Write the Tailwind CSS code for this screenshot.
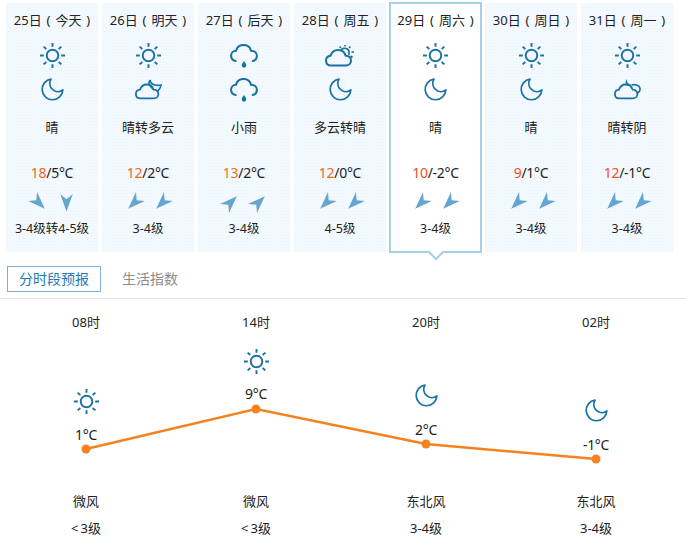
<!DOCTYPE html>
<html lang="zh">
<head>
  <meta charset="UTF-8" />
  <title>天气预报</title>
  <script src="https://cdn.jsdelivr.net/npm/@tailwindcss/browser@4"></script>
</head>
<body class="bg-white w-[686px] h-[552px] overflow-hidden text-[13px] text-[#222] font-['Noto_Sans','Noto_Sans_CJK_SC',sans-serif]">
  <svg class="hidden">
    <symbol id="sun" viewBox="0 0 28 28">
      <g fill="none" stroke="currentColor" stroke-width="2">
        <circle cx="14" cy="14" r="6" />
        <path d="M14 1v4M14 23v4M1 14h4M23 14h4M4.800 4.800l2.800 2.400M20.400 20.800l2.800 2.400M23.200 4.800l-2.800 2.400M7.600 20.800l-2.800 2.400" />
      </g>
    </symbol>
    <symbol id="moon" viewBox="0 0 24 24">
      <path d="M10.500 1.200A10.800 10.800 0 1 0 22.800 12.500A8.500 8.500 0 0 1 10.500 1.200Z" fill="none" stroke="currentColor" stroke-width="1.800" stroke-linejoin="round" />
    </symbol>
    <symbol id="rain" viewBox="0 0 30 26">
      <path d="M6 18.500C2.800 17.800 1 15.500 1 12.700 1 9.600 3.400 7.300 6.400 7.200 7.400 3.500 10.500 1 14.500 1 18.500 1 21.700 3.700 22.600 7.200 26 7.100 29 9.500 29 12.800 29 15.500 27.200 17.700 24.500 18.500" fill="none" stroke="currentColor" stroke-width="2.200" stroke-linecap="round" />
      <path d="M15 18.500c1.700 2.400 2.500 3.400 2.500 4.600a2.500 2.500 0 0 1-5 0c0-1.200.8-2.200 2.500-4.600Z" fill="currentColor" />
    </symbol>
    <symbol id="cloudmoon" viewBox="0 0 30 24">
      <path d="M6 22.500C2.500 22.500 1 20 1 17.500 1 15 3 13 5.600 12.700 6.800 9 9.800 7 13 7 16.800 7 19.700 9.500 20.600 12.700 23.800 12.500 26 14.800 26 17.600 26 20.500 23.800 22.500 21 22.500Z" fill="none" stroke="currentColor" stroke-width="2" stroke-linejoin="round" />
      <path d="M16.500 2C15 5 15.500 7.500 17.500 9.500 19 11 19.500 11.500 20.500 12.500M16.500 2C17.500 6 21 9 29 7.500 28.500 10.500 27 13 25 14.500" fill="none" stroke="currentColor" stroke-width="1.800" />
    </symbol>
    <symbol id="cloudsun" viewBox="0 0 30 22">
      <path d="M6 20.500C2.500 20.500 1 18 1 15.500 1 13 3 11 5.600 10.700 6.800 7 9.800 5 13 5 16.800 5 19.700 7.500 20.600 10.700 23.800 10.500 26 12.800 26 15.600 26 18.500 23.800 20.500 21 20.500Z" fill="none" stroke="currentColor" stroke-width="2" stroke-linejoin="round" />
      <path d="M15.800 5.500A4.500 4.500 0 1 1 23.600 10M20 0v1.500M14.500 1.500l1.500 1.500M25.500 1.500l-1.500 1.500M29 7h-2.500M27.500 12.500l-2-1.500" fill="none" stroke="currentColor" stroke-width="1.700" />
    </symbol>
    <symbol id="cloudnight" viewBox="0 0 30 24">
      <path d="M6 22.500C2.500 22.500 1 20 1 17.500 1 15 3 13 5.600 12.700 6.800 9 9.800 7 13 7 16.800 7 19.700 9.500 20.600 12.700 23.800 12.500 26 14.800 26 17.600 26 20.500 23.800 22.500 21 22.500Z" fill="none" stroke="currentColor" stroke-width="2" stroke-linejoin="round" />
      <path d="M14.500 1C13.600 4.500 16 7 20 7.500 18 9 15.200 8.500 13.500 7 12.300 5.300 13 2.500 14.500 1Z" fill="currentColor" />
      <path d="M19.500 7.500C24 6.500 28.500 8 29 11.500 29.300 13.800 27.800 15.500 26 16.500" fill="none" stroke="currentColor" stroke-width="1.800" />
    </symbol>
    <symbol id="wind" viewBox="0 0 20 20">
      <path d="M10 1.500 16 18 10 13 4 18Z" fill="#67a5d1" />
    </symbol>
  </svg>

  <div class="flex gap-1 pl-[6px] pt-[3px] text-center">
    <div class="flex flex-col items-center w-[92px] h-[249px] pt-[8px] bg-[#f1fbff] bg-[radial-gradient(#fce9f9_0.8px,transparent_0.9px)] bg-[length:3px_3px]">
      <div class="h-[18px] leading-[18px] whitespace-nowrap [word-spacing:1.5px]">25日 ( 今天 )</div>
      <svg class="mt-[13px] w-[27px] h-[27px] text-[#1a72a3]"><use href="#sun" /></svg>
      <svg class="mt-[9px] w-[23px] h-[23px] text-[#1a72a3]"><use href="#moon" /></svg>
      <div class="mt-[17px] h-[18px] leading-[18px]">晴</div>
      <div class="mt-[28px] h-[18px] leading-[18px] text-[14px] tracking-[-0.3px]"><span class="text-[#f0641e]">18</span>/5°C</div>
      <div class="mt-[10px] flex gap-[7px]">
        <svg class="w-[21px] h-[21px] rotate-[135deg]"><use href="#wind" /></svg>
        <svg class="w-[21px] h-[21px] rotate-180"><use href="#wind" /></svg>
      </div>
      <div class="mt-[7px] h-[18px] leading-[18px] text-[12.5px] whitespace-nowrap">3-4级转4-5级</div>
    </div>

    <div class="flex flex-col items-center w-[92px] h-[249px] pt-[8px] bg-[#f1fbff] bg-[radial-gradient(#fce9f9_0.8px,transparent_0.9px)] bg-[length:3px_3px]">
      <div class="h-[18px] leading-[18px] whitespace-nowrap [word-spacing:1.5px]">26日 ( 明天 )</div>
      <svg class="mt-[13px] w-[27px] h-[27px] text-[#1a72a3]"><use href="#sun" /></svg>
      <svg class="mt-[9px] w-[27px] h-[22px] text-[#1a72a3]"><use href="#cloudmoon" /></svg>
      <div class="mt-[18px] h-[18px] leading-[18px]">晴转多云</div>
      <div class="mt-[28px] h-[18px] leading-[18px] text-[14px] tracking-[-0.3px]"><span class="text-[#f0641e]">12</span>/2°C</div>
      <div class="mt-[10px] flex gap-[7px]">
        <svg class="w-[21px] h-[21px] rotate-[225deg]"><use href="#wind" /></svg>
        <svg class="w-[21px] h-[21px] rotate-[225deg]"><use href="#wind" /></svg>
      </div>
      <div class="mt-[7px] h-[18px] leading-[18px] text-[12.5px]">3-4级</div>
    </div>

    <div class="flex flex-col items-center w-[92px] h-[249px] pt-[8px] bg-[#f1fbff] bg-[radial-gradient(#fce9f9_0.8px,transparent_0.9px)] bg-[length:3px_3px]">
      <div class="h-[18px] leading-[18px] whitespace-nowrap [word-spacing:1.5px]">27日 ( 后天 )</div>
      <svg class="mt-[15px] w-[28px] h-[24px] text-[#1a72a3]"><use href="#rain" /></svg>
      <svg class="mt-[10px] w-[28px] h-[24px] text-[#1a72a3]"><use href="#rain" /></svg>
      <div class="mt-[16px] h-[18px] leading-[18px]">小雨</div>
      <div class="mt-[28px] h-[18px] leading-[18px] text-[14px] tracking-[-0.3px]"><span class="text-[#e8751a]">13</span>/2°C</div>
      <div class="mt-[10px] flex gap-[7px]">
        <svg class="w-[21px] h-[21px] rotate-45"><use href="#wind" /></svg>
        <svg class="w-[21px] h-[21px] rotate-45"><use href="#wind" /></svg>
      </div>
      <div class="mt-[7px] h-[18px] leading-[18px] text-[12.5px]">3-4级</div>
    </div>

    <div class="flex flex-col items-center w-[92px] h-[249px] pt-[8px] bg-[#f1fbff] bg-[radial-gradient(#fce9f9_0.8px,transparent_0.9px)] bg-[length:3px_3px]">
      <div class="h-[18px] leading-[18px] whitespace-nowrap [word-spacing:1.5px]">28日 ( 周五 )</div>
      <svg class="mt-[16px] w-[30px] h-[22px] text-[#1a72a3]"><use href="#cloudsun" /></svg>
      <svg class="mt-[11px] w-[23px] h-[23px] text-[#1a72a3]"><use href="#moon" /></svg>
      <div class="mt-[17px] h-[18px] leading-[18px]">多云转晴</div>
      <div class="mt-[28px] h-[18px] leading-[18px] text-[14px] tracking-[-0.3px]"><span class="text-[#f0641e]">12</span>/0°C</div>
      <div class="mt-[10px] flex gap-[7px]">
        <svg class="w-[21px] h-[21px] rotate-[225deg]"><use href="#wind" /></svg>
        <svg class="w-[21px] h-[21px] rotate-[225deg]"><use href="#wind" /></svg>
      </div>
      <div class="mt-[7px] h-[18px] leading-[18px] text-[12.5px]">4-5级</div>
    </div>

    <div class="relative flex flex-col items-center w-[93px] h-[251px] -ml-[1px] -mt-[1px] pt-[7px] bg-white border-2 border-[#a8cfe8]">
      <div class="h-[18px] leading-[18px] whitespace-nowrap [word-spacing:1.5px]">29日 ( 周六 )</div>
      <svg class="mt-[13px] w-[27px] h-[27px] text-[#1a72a3]"><use href="#sun" /></svg>
      <svg class="mt-[9px] w-[23px] h-[23px] text-[#1a72a3]"><use href="#moon" /></svg>
      <div class="mt-[17px] h-[18px] leading-[18px]">晴</div>
      <div class="mt-[28px] h-[18px] leading-[18px] text-[14px] tracking-[-0.3px]"><span class="text-[#f0501e]">10</span>/-2°C</div>
      <div class="mt-[10px] flex gap-[7px]">
        <svg class="w-[21px] h-[21px] rotate-[225deg]"><use href="#wind" /></svg>
        <svg class="w-[21px] h-[21px] rotate-[225deg]"><use href="#wind" /></svg>
      </div>
      <div class="mt-[7px] h-[18px] leading-[18px] text-[12.5px]">3-4级</div>
      <div class="absolute -bottom-[7px] left-1/2 -ml-[6px] w-[12px] h-[12px] rotate-45 bg-white border-r-2 border-b-2 border-[#a8cfe8]"></div>
    </div>

    <div class="flex flex-col items-center w-[92px] h-[249px] pt-[8px] -ml-[1px] bg-[#f1fbff] bg-[radial-gradient(#fce9f9_0.8px,transparent_0.9px)] bg-[length:3px_3px]">
      <div class="h-[18px] leading-[18px] whitespace-nowrap [word-spacing:1.5px]">30日 ( 周日 )</div>
      <svg class="mt-[13px] w-[27px] h-[27px] text-[#1a72a3]"><use href="#sun" /></svg>
      <svg class="mt-[9px] w-[23px] h-[23px] text-[#1a72a3]"><use href="#moon" /></svg>
      <div class="mt-[17px] h-[18px] leading-[18px]">晴</div>
      <div class="mt-[28px] h-[18px] leading-[18px] text-[14px] tracking-[-0.3px]"><span class="text-[#f0501e]">9</span>/1°C</div>
      <div class="mt-[10px] flex gap-[7px]">
        <svg class="w-[21px] h-[21px] rotate-[225deg]"><use href="#wind" /></svg>
        <svg class="w-[21px] h-[21px] rotate-[225deg]"><use href="#wind" /></svg>
      </div>
      <div class="mt-[7px] h-[18px] leading-[18px] text-[12.5px]">3-4级</div>
    </div>

    <div class="flex flex-col items-center w-[92px] h-[249px] pt-[8px] bg-[#f1fbff] bg-[radial-gradient(#fce9f9_0.8px,transparent_0.9px)] bg-[length:3px_3px]">
      <div class="h-[18px] leading-[18px] whitespace-nowrap [word-spacing:1.5px]">31日 ( 周一 )</div>
      <svg class="mt-[13px] w-[27px] h-[27px] text-[#1a72a3]"><use href="#sun" /></svg>
      <svg class="mt-[9px] w-[27px] h-[22px] text-[#1a72a3]"><use href="#cloudnight" /></svg>
      <div class="mt-[18px] h-[18px] leading-[18px]">晴转阴</div>
      <div class="mt-[28px] h-[18px] leading-[18px] text-[14px] tracking-[-0.3px]"><span class="text-[#f0501e]">12</span>/-1°C</div>
      <div class="mt-[10px] flex gap-[7px]">
        <svg class="w-[21px] h-[21px] rotate-[225deg]"><use href="#wind" /></svg>
        <svg class="w-[21px] h-[21px] rotate-[225deg]"><use href="#wind" /></svg>
      </div>
      <div class="mt-[7px] h-[18px] leading-[18px] text-[12.5px]">3-4级</div>
    </div>
  </div>

  <div class="flex items-start mt-[13px] h-[33px] border-b border-[#dfe5ea] text-[14px]">
    <div class="ml-[7px] w-[94px] h-[26px] leading-[24px] text-center border border-[#7fb0d4] text-[#1f78b4]">分时段预报</div>
    <div class="ml-[21px] h-[26px] leading-[26px] text-[#8c8c8c]">生活指数</div>
  </div>

  <div class="relative w-[680px] ml-[1px]">
    <div class="grid grid-cols-4 pt-[14px] text-center">
      <div class="h-[18px] leading-[18px]">08时</div>
      <div class="h-[18px] leading-[18px]">14时</div>
      <div class="h-[18px] leading-[18px]">20时</div>
      <div class="h-[18px] leading-[18px]">02时</div>
    </div>

    <div class="relative grid grid-cols-4 h-[146px]">
      <svg class="absolute left-0 top-0 w-[680px] h-[146px]" viewBox="0 0 680 146">
        <polyline points="85,118 255,78 425,113 595,128" fill="none" stroke="#f5821f" stroke-width="2.500" />
        <circle cx="85" cy="118" r="4.500" fill="#f5821f" />
        <circle cx="255" cy="78" r="4.500" fill="#f5821f" />
        <circle cx="425" cy="113" r="4.500" fill="#f5821f" />
        <circle cx="595" cy="128" r="4.500" fill="#f5821f" />
      </svg>
      <div class="flex flex-col items-center pt-[57px]">
        <svg class="w-[27px] h-[27px] text-[#1a72a3]"><use href="#sun" /></svg>
        <div class="mt-[11px] h-[18px] leading-[18px] text-[14px] tracking-[-0.3px]">1°C</div>
      </div>
      <div class="flex flex-col items-center pt-[17px]">
        <svg class="w-[27px] h-[27px] text-[#1a72a3]"><use href="#sun" /></svg>
        <div class="mt-[10px] h-[18px] leading-[18px] text-[14px] tracking-[-0.3px]">9°C</div>
      </div>
      <div class="flex flex-col items-center pt-[53px]">
        <svg class="w-[23px] h-[23px] text-[#1a72a3]"><use href="#moon" /></svg>
        <div class="mt-[14px] h-[18px] leading-[18px] text-[14px] tracking-[-0.3px]">2°C</div>
      </div>
      <div class="flex flex-col items-center pt-[68px]">
        <svg class="w-[23px] h-[23px] text-[#1a72a3]"><use href="#moon" /></svg>
        <div class="mt-[14px] h-[18px] leading-[18px] text-[14px] tracking-[-0.3px]">-1°C</div>
      </div>
    </div>

    <div class="grid grid-cols-4 pt-[15px] text-center">
      <div class="h-[18px] leading-[18px]">微风</div>
      <div class="h-[18px] leading-[18px]">微风</div>
      <div class="h-[18px] leading-[18px]">东北风</div>
      <div class="h-[18px] leading-[18px]">东北风</div>
    </div>
    <div class="grid grid-cols-4 pt-[9px] text-center">
      <div class="h-[18px] leading-[18px]">&lt;&#8201;3级</div>
      <div class="h-[18px] leading-[18px]">&lt;&#8201;3级</div>
      <div class="h-[18px] leading-[18px]">3-4级</div>
      <div class="h-[18px] leading-[18px]">3-4级</div>
    </div>
  </div>
</body>
</html>
